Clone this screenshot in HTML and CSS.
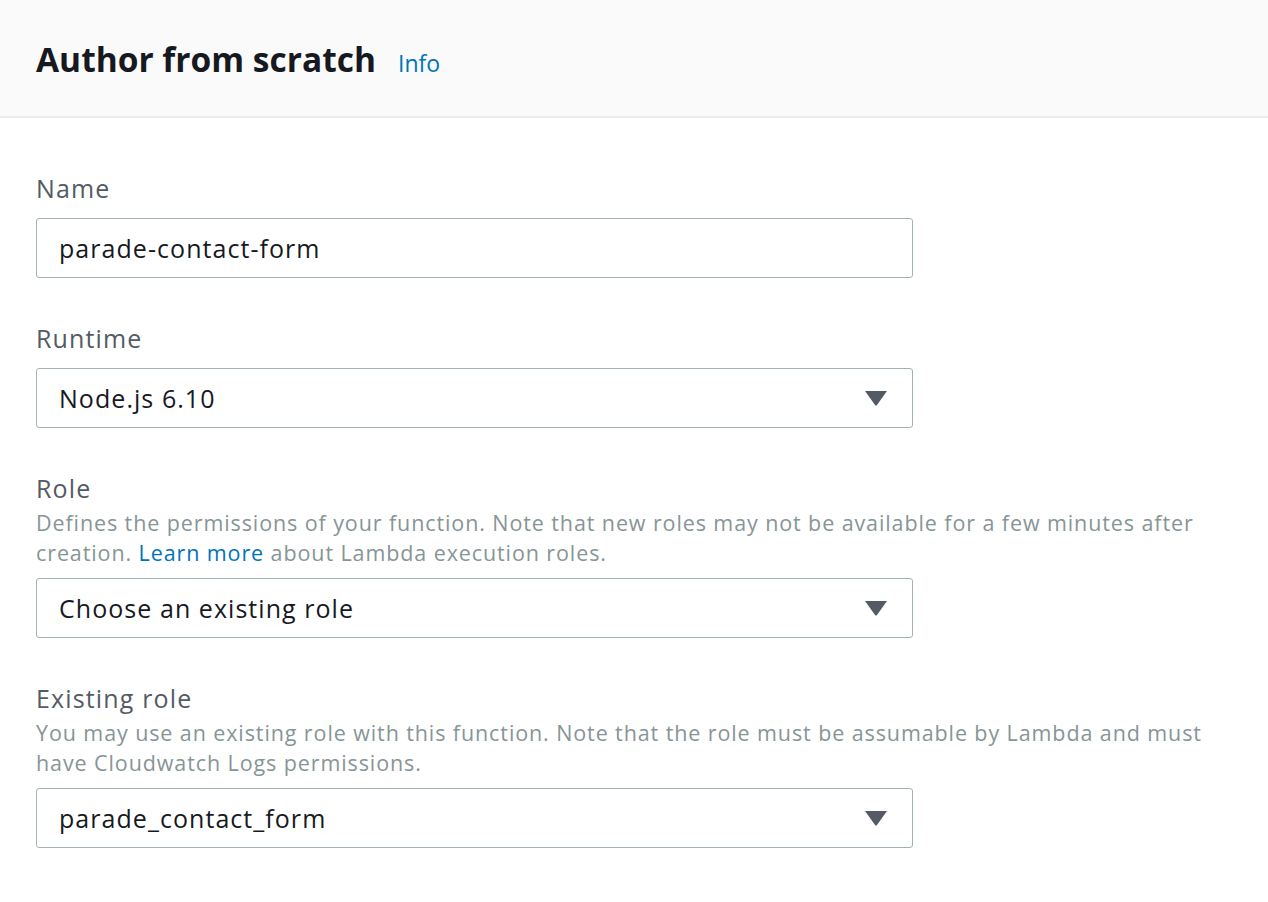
FILE: index.html
```html
<!DOCTYPE html>
<html lang="en">
<head>
<meta charset="utf-8">
<title>Author from scratch</title>
<link rel="stylesheet" href="styles.css">
</head>
<body>
<div class="header">
  <h2 class="title">Author from scratch</h2>
  <a class="info" href="#">Info</a>
</div>
<div class="form">
  <div class="field">
    <div class="label">Name</div>
    <div class="box"><span class="value">parade-contact-form</span></div>
  </div>
  <div class="field">
    <div class="label">Runtime</div>
    <div class="box select"><span class="value">Node.js 6.10</span><svg class="caret" width="22" height="15" viewBox="0 0 22 15"><path d="M0 0 H22 L12 14 Q11 15 10 14 Z" fill="#545b64"/></svg></div>
  </div>
  <div class="field">
    <div class="label">Role</div>
    <div class="desc"><span>Defines the permissions of your function. Note that new roles may not be available for a few minutes after</span><br><span>creation.</span> <a href="#">Learn more</a> <span>about Lambda execution roles.</span></div>
    <div class="box select"><span class="value">Choose an existing role</span><svg class="caret" width="22" height="15" viewBox="0 0 22 15"><path d="M0 0 H22 L12 14 Q11 15 10 14 Z" fill="#545b64"/></svg></div>
  </div>
  <div class="field">
    <div class="label">Existing role</div>
    <div class="desc">You may use an existing role with this function. Note that the role must be assumable by Lambda and must have Cloudwatch Logs permissions.</div>
    <div class="box select"><span class="value">parade_contact_form</span><svg class="caret" width="22" height="15" viewBox="0 0 22 15"><path d="M0 0 H22 L12 14 Q11 15 10 14 Z" fill="#545b64"/></svg></div>
  </div>
</div>
</body>
</html>
```
FILE: styles.css
```css
* { box-sizing: border-box; }
body {
  margin: 0;
  background: #ffffff;
  font-family: "Open Sans", "Noto Sans", sans-serif;
  color: #16191f;
}
.header {
  height: 118px;
  background: #fafafa;
  border-bottom: 2px solid #eaeded;
  display: flex;
  align-items: baseline;
  padding: 35px 36px 0;
  gap: 22px;
}
.title {
  margin: 0;
  font-size: 33.5px;
  line-height: 48px;
  font-weight: 700;
  color: #16191f;
}
.info {
  color: #0073bb;
  font-size: 23px;
  text-decoration: none;
}
.form {
  padding: 55px 0 0 36px;
  width: 913px;
  display: flex;
  flex-direction: column;
  gap: 45px;
}
.field {
  display: flex;
  flex-direction: column;
}
.label {
  font-size: 25px;
  letter-spacing: 1.15px;
  line-height: 30px;
  color: #545b64;
}
.desc {
  width: 1200px;
  margin-top: 5px;
  font-size: 21.5px;
  letter-spacing: 0.9px;
  line-height: 30px;
  color: #879596;
}
.desc a {
  color: #0073bb;
  text-decoration: none;
}
.box {
  margin-top: 15px;
  height: 60px;
  border: 1px solid #a5b2b3;
  border-radius: 3px;
  display: flex;
  align-items: center;
  justify-content: space-between;
  padding: 0 25px 0 22px;
  background: #fff;
}
.desc + .box { margin-top: 10px; }
.value {
  font-size: 25px;
  letter-spacing: 1.05px;
  color: #16191f;
}
.caret { display: block; }
```
